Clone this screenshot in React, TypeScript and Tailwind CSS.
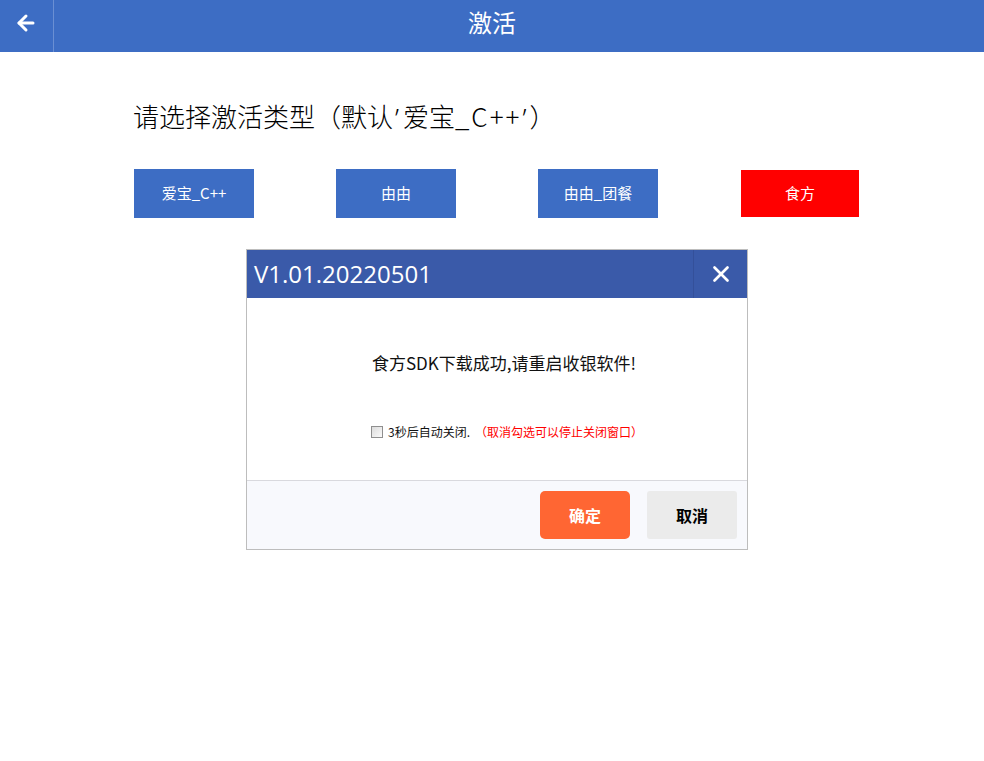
import { ArrowLeft, X } from "lucide-react";

const types = [
  { label: "爱宝_C++", active: false },
  { label: "由由", active: false },
  { label: "由由_团餐", active: false },
  { label: "食方", active: true },
];

const latin = { fontFamily: '"Noto Sans", sans-serif' };

export default function App() {
  return (
    <div
      className="w-[984px] h-[761px] bg-white overflow-hidden"
      style={{ fontFamily: '"Noto Sans CJK SC", "Noto Sans", sans-serif' }}
    >
      {/* top bar */}
      <div className="flex h-[52px] bg-[#3d6dc4] text-white">
        <button className="flex w-[54px] items-center justify-center border-r border-[#6a8fd3] pb-[6px] pr-[2px]">
          <ArrowLeft size={24} strokeWidth={3} />
        </button>
        <div className="flex flex-1 items-center justify-center pr-[54px] text-[24px] leading-none -mt-[9px]">
          激活
        </div>
      </div>

      <div className="pl-[133px]">
        <h1 className="mt-[48px] h-[32px] text-[26px] leading-[32px] font-light text-black">
          请选择激活类型（默认
          <span style={latin} className="ml-[2px] mr-[4px]">’</span>
          爱宝
          <span className="tracking-[2px]">_C++</span>
          <span style={latin} className="ml-[1px] mr-[3px]">’</span>）
        </h1>

        <div className="mt-[37px] flex gap-[82px] pl-[1px]">
          {types.map((t) =>
            t.active ? (
              <button
                key={t.label}
                className="mt-[1px] ml-[1px] h-[47px] w-[118px] bg-[#ff0000] text-[15px] text-white"
              >
                {t.label}
              </button>
            ) : (
              <button
                key={t.label}
                className="h-[49px] w-[120px] bg-[#3d6dc4] text-[15px] text-white"
              >
                {t.label}
              </button>
            )
          )}
        </div>
      </div>

      {/* dialog */}
      <div className="ml-[246px] mt-[31px] w-[502px] border border-[#bdbdbd] bg-white">
        <div className="flex h-[48px] bg-[#3a5aa9] text-white">
          <div
            className="flex flex-1 items-center pl-[7px] text-[24px]"
            style={{ fontFamily: '"Open Sans", "Noto Sans", sans-serif' }}
          >
            V1.01.20220501
          </div>
          <button className="flex w-[54px] items-center justify-center border-l border-[#34509a]">
            <X size={26} strokeWidth={2.5} />
          </button>
        </div>

        <div className="h-[182px] flex flex-col items-center">
          <p className="mt-[52px] pl-[14px] text-[17px] leading-[26px] text-[#111]">
            食方SDK下载成功,请重启收银软件!
          </p>
          <div className="mt-[48px] ml-[20px] flex items-center text-[12px] leading-[16px]">
            <span className="mr-[5px] inline-block h-[12px] w-[12px] border border-[#8f8f8f] bg-gradient-to-br from-[#dcdcdc] to-[#fafafa]" />
            <span className="text-[#111]">3秒后自动关闭.</span>
            <span className="ml-[5px] text-[#ff0000]">（取消勾选可以停止关闭窗口）</span>
          </div>
        </div>

        <div className="flex h-[69px] items-start justify-end gap-[17px] border-t border-[#d9d9de] bg-[#f8f9fd] pr-[10px] pt-[10px]">
          <button className="h-[48px] w-[90px] rounded-[5px] bg-[#ff6633] text-[16px] font-bold text-white">
            确定
          </button>
          <button className="h-[48px] w-[90px] rounded-[3px] bg-[#ebebeb] text-[16px] font-bold text-black">
            取消
          </button>
        </div>
      </div>
    </div>
  );
}
